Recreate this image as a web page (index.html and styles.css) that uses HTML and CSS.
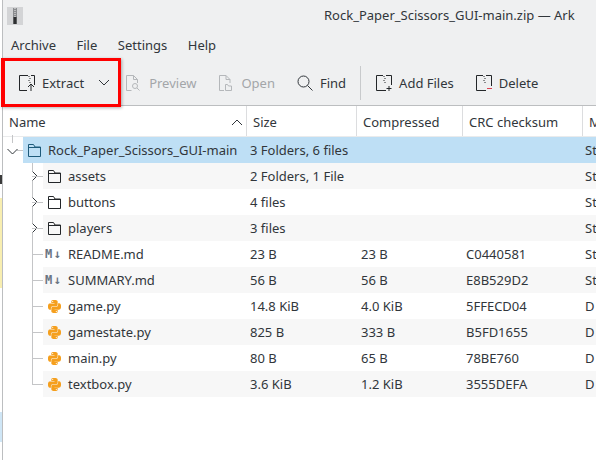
FILE: index.html
```html
<!DOCTYPE html>
<html lang="en">
<head>
<meta charset="UTF-8">
<title>Rock_Paper_Scissors_GUI-main.zip — Ark</title>
<link rel="stylesheet" href="styles.css">
</head>
<body>
<svg class="defs" xmlns="http://www.w3.org/2000/svg">
  <symbol id="folder" viewBox="0 0 13 13">
    <path d="M.5 12.500V.5h5l1.500 2.500h5.500v9.500z" fill="none" stroke="currentColor"/>
    <path d="M.5 3.500h12" fill="none" stroke="currentColor"/>
  </symbol>
  <symbol id="python" viewBox="0 0 24 24">
    <path fill="#f59f1d" fill-rule="evenodd" d="M14.25.18l.9.2.73.26.59.3.45.32.34.34.25.34.16.33.1.3.04.26.02.2-.01.13V8.5l-.05.63-.13.55-.21.46-.26.38-.3.31-.33.25-.35.19-.35.14-.33.1-.3.07-.26.04-.21.02H8.77l-.69.05-.59.14-.5.22-.41.27-.33.32-.27.35-.2.36-.15.37-.1.35-.07.32-.04.27-.02.21v3.06H3.17l-.21-.03-.28-.07-.32-.12-.35-.18-.36-.26-.36-.36-.35-.46-.32-.59-.28-.73-.21-.88-.14-1.05-.05-1.23.06-1.22.16-1.04.24-.87.32-.71.36-.57.4-.44.42-.33.42-.24.4-.16.36-.1.32-.05.24-.01h.16l.06.01h8.16v-.83H6.18l-.01-2.75-.02-.37.05-.34.11-.31.17-.28.25-.26.31-.23.38-.2.44-.18.51-.15.58-.12.64-.1.71-.06.77-.04.84-.02 1.27.05zm-6.3 1.98l-.23.33-.08.41.08.41.23.34.33.22.41.09.41-.09.33-.22.23-.34.08-.41-.08-.41-.23-.33-.33-.23-.41-.08-.41.08zm13.09 3.95l.28.06.32.12.35.18.36.27.36.35.35.47.32.59.28.73.21.88.14 1.04.05 1.23-.06 1.23-.16 1.04-.24.86-.32.71-.36.57-.4.45-.42.33-.42.24-.4.16-.36.09-.32.05-.24.02-.16-.01h-8.22v.82h5.84l.01 2.76.02.36-.05.34-.11.31-.17.29-.25.25-.31.24-.38.2-.44.17-.51.15-.58.13-.64.09-.71.07-.77.04-.84.01-1.27-.04-1.07-.14-.9-.2-.73-.25-.59-.3-.45-.33-.34-.34-.25-.34-.16-.33-.1-.3-.04-.25-.02-.2.01-.13v-5.34l.05-.64.13-.54.21-.46.26-.38.3-.32.33-.24.35-.2.35-.14.33-.1.3-.06.26-.04.21-.02.13-.01h5.84l.69-.05.59-.14.5-.21.41-.28.33-.32.27-.35.2-.36.15-.36.1-.35.07-.32.04-.28.02-.21V6.070h2.090l.14.01zm-6.47 14.250l-.23.33-.08.41.08.41.23.33.33.23.41.08.41-.08.33-.23.23-.33.08-.41-.08-.41-.23-.33-.33-.23-.41-.08-.41.08z"/>
  </symbol>
  <symbol id="expand" viewBox="0 0 8 10">
    <path d="M1.500 .5L6 5 1.500 9.500" fill="none" stroke="#31363b"/>
  </symbol>
</svg>

<div class="page">
  <div class="sliver"></div>
  <div class="window">

    <div class="titlebar">
      <svg class="app-icon" width="16" height="18" viewBox="0 0 16 18">
        <rect width="16" height="18" fill="#d3d4d6"/>
        <rect x="6" y="1" width="4" height="16" fill="#8a8c8f"/>
        <path d="M8 1v9" stroke="#eee" stroke-dasharray="1 1"/>
        <rect x="6.500" y="10" width="3" height="7" fill="#2d2f31"/>
      </svg>
      <span class="title">Rock_Paper_Scissors_GUI-main.zip — Ark</span>
    </div>

    <div class="menubar">
      <span>Archive</span>
      <span>File</span>
      <span>Settings</span>
      <span>Help</span>
    </div>

    <div class="toolbar">
      <div class="tool tool-extract">
        <svg width="16" height="16" viewBox="0 0 16 16" fill="none" stroke="#232629">
          <path d="M9 .5H.5v15H8M12 .5h3.500V10"/>
          <path d="M10 1v1M11 3v1M10 5v1M11 7v1"/>
          <path d="M12 16V9M9 12l3-3 3 3"/>
        </svg>
        <span>Extract</span>
        <svg class="drop" width="12" height="7" viewBox="0 0 12 7" fill="none" stroke="#31363b"><path d="M1 1l5 5 5-5"/></svg>
      </div>
      <div class="tool off">
        <svg width="16" height="16" viewBox="0 0 16 16" fill="none" stroke="#b4b7ba">
          <path d="M7.500 .5H.5v15h5M7.500 .5L11.500 4.500V8M7.500 .5v4h4"/>
          <circle cx="9" cy="11" r="2.500"/><path d="M11 13l2.500 2.500"/>
        </svg>
        <span>Preview</span>
      </div>
      <div class="tool off">
        <svg width="16" height="16" viewBox="0 0 16 16" fill="none" stroke="#b4b7ba">
          <path d="M8 .5H1.500v15H6M8 .5L12 4.500V8M8 .5v4h4"/>
          <path d="M7.500 15.500v-6h2l1 1.500h3v4.500z"/>
        </svg>
        <span>Open</span>
      </div>
      <div class="tool">
        <svg width="16" height="16" viewBox="0 0 16 16" fill="none" stroke="#31363b">
          <circle cx="6.500" cy="6.500" r="5.500"/><path d="M10.500 10.500l5 5"/>
        </svg>
        <span>Find</span>
      </div>
      <div class="tool-sep"></div>
      <div class="tool">
        <svg width="16" height="16" viewBox="0 0 16 16" fill="none" stroke="#232629">
          <path d="M7 .5H.5v15H10M10 .5h5.500V10"/>
          <path d="M8 1v1M9 3v1M8 5v1M9 7v1"/>
          <path d="M13 11v5M10.500 13.500h5"/>
        </svg>
        <span>Add Files</span>
      </div>
      <div class="tool">
        <svg width="16" height="16" viewBox="0 0 16 16" fill="none" stroke="#232629">
          <path d="M7 .5H.5v15H10M10 .5h5.500V11"/>
          <path d="M8 1v1M9 3v1M8 5v1M9 7v1"/>
          <path d="M11 13.500h5" stroke="#da4453"/>
        </svg>
        <span>Delete</span>
      </div>
    </div>

    <div class="tree">
      <div class="head">
        <div class="head-cell col-name">Name
          <svg class="sort" width="12" height="7" viewBox="0 0 12 7" fill="none" stroke="#31363b"><path d="M1 6l5-5 5 5"/></svg>
        </div>
        <div class="head-cell col-size">Size</div>
        <div class="head-cell col-comp">Compressed</div>
        <div class="head-cell col-crc">CRC checksum</div>
        <div class="head-cell col-meth">M</div>
      </div>

      <div class="row root">
        <div class="branch">
          <svg class="open-arrow" width="11" height="7" viewBox="0 0 11 7" fill="none" stroke="#31363b"><path d="M.5 1l5 5 5-5"/></svg>
        </div>
        <div class="cells selected">
          <div class="cell col-name"><svg class="ico ico-root"><use href="#folder"/></svg>Rock_Paper_Scissors_GUI-main</div>
          <div class="cell col-size">3 Folders, 6 files</div>
          <div class="cell col-comp"></div>
          <div class="cell col-crc"></div>
          <div class="cell col-meth">St</div>
        </div>
      </div>

      <div class="row">
        <div class="branch"><svg class="arrow" width="8" height="10"><use href="#expand"/></svg></div>
        <div class="cells alt">
          <div class="cell col-name"><svg class="ico"><use href="#folder"/></svg>assets</div>
          <div class="cell col-size">2 Folders, 1 File</div>
          <div class="cell col-comp"></div>
          <div class="cell col-crc"></div>
          <div class="cell col-meth">St</div>
        </div>
      </div>

      <div class="row">
        <div class="branch"><svg class="arrow" width="8" height="10"><use href="#expand"/></svg></div>
        <div class="cells">
          <div class="cell col-name"><svg class="ico"><use href="#folder"/></svg>buttons</div>
          <div class="cell col-size">4 files</div>
          <div class="cell col-comp"></div>
          <div class="cell col-crc"></div>
          <div class="cell col-meth">St</div>
        </div>
      </div>

      <div class="row">
        <div class="branch"><svg class="arrow" width="8" height="10"><use href="#expand"/></svg></div>
        <div class="cells alt">
          <div class="cell col-name"><svg class="ico"><use href="#folder"/></svg>players</div>
          <div class="cell col-size">3 files</div>
          <div class="cell col-comp"></div>
          <div class="cell col-crc"></div>
          <div class="cell col-meth">St</div>
        </div>
      </div>

      <div class="row">
        <div class="branch"></div>
        <div class="cells">
          <div class="cell col-name"><span class="md">M↓</span>README.md</div>
          <div class="cell col-size">23 B</div>
          <div class="cell col-comp">23 B</div>
          <div class="cell col-crc">C0440581</div>
          <div class="cell col-meth">St</div>
        </div>
      </div>

      <div class="row">
        <div class="branch"></div>
        <div class="cells alt">
          <div class="cell col-name"><span class="md">M↓</span>SUMMARY.md</div>
          <div class="cell col-size">56 B</div>
          <div class="cell col-comp">56 B</div>
          <div class="cell col-crc">E8B529D2</div>
          <div class="cell col-meth">St</div>
        </div>
      </div>

      <div class="row">
        <div class="branch"></div>
        <div class="cells">
          <div class="cell col-name"><svg class="ico"><use href="#python"/></svg>game.py</div>
          <div class="cell col-size">14.8 KiB</div>
          <div class="cell col-comp">4.0 KiB</div>
          <div class="cell col-crc">5FFECD04</div>
          <div class="cell col-meth">D</div>
        </div>
      </div>

      <div class="row">
        <div class="branch"></div>
        <div class="cells alt">
          <div class="cell col-name"><svg class="ico"><use href="#python"/></svg>gamestate.py</div>
          <div class="cell col-size">825 B</div>
          <div class="cell col-comp">333 B</div>
          <div class="cell col-crc">B5FD1655</div>
          <div class="cell col-meth">D</div>
        </div>
      </div>

      <div class="row">
        <div class="branch"></div>
        <div class="cells">
          <div class="cell col-name"><svg class="ico"><use href="#python"/></svg>main.py</div>
          <div class="cell col-size">80 B</div>
          <div class="cell col-comp">65 B</div>
          <div class="cell col-crc">78BE760</div>
          <div class="cell col-meth">D</div>
        </div>
      </div>

      <div class="row last">
        <div class="branch"></div>
        <div class="cells alt">
          <div class="cell col-name"><svg class="ico"><use href="#python"/></svg>textbox.py</div>
          <div class="cell col-size">3.6 KiB</div>
          <div class="cell col-comp">1.2 KiB</div>
          <div class="cell col-crc">3555DEFA</div>
          <div class="cell col-meth">D</div>
        </div>
      </div>
    </div>

  </div>
</div>

<div class="callout"></div>
</body>
</html>
```

FILE: styles.css
```css
html, body { margin: 0; padding: 0; background: #fff; overflow: hidden; }
body { width: 596px; height: 460px; position: relative; font: 13px "Noto Sans", sans-serif; color: #31363b; }
.defs { display: none; }

.page { display: flex; width: 596px; height: 460px; }
.sliver {
  width: 2px; flex: none;
  background: linear-gradient(#fff 0, #fff 175px, #3a3a3a 175px, #3a3a3a 184px, #fff 184px, #fff 198px, #f8eeb0 198px, #f8eeb0 288px, #fff 288px, #fff 412px, #cfe6f6 412px, #cfe6f6 442px, #fff 442px);
}
.window { flex: 1; min-width: 0; border-left: 1px solid #bcbec0; display: flex; flex-direction: column; }

.titlebar { height: 29px; background: #eff0f1; display: flex; align-items: center; padding-left: 4px; }
.app-icon { flex: none; margin-top: 3px; }
.title { margin-left: 301px; white-space: nowrap; }

.menubar { height: 31px; background: #eff0f1; display: flex; align-items: center; gap: 20.500px; padding-left: 8px; }

.toolbar { height: 45px; background: #eff0f1; display: flex; align-items: center; padding-left: 5px; border-bottom: 1px solid #bcbec0; }
.tool { display: flex; align-items: center; gap: 7px; padding: 0 11px; white-space: nowrap; }
.tool svg { flex: none; }
.tool-extract { padding-right: 5px; }
.drop { margin-left: 7px; }
.off { color: #a3a6a9; }
.tool-sep { width: 1px; height: 34px; background: #c8cacc; margin: 0 4px 0 3px; }

.tree { flex: 1; background: #fff; }
.head { display: flex; height: 30px; border-bottom: 1px solid #eaebec; }
.head-cell { display: flex; align-items: center; justify-content: space-between; padding: 2px 3px 0 6px; box-sizing: border-box; border-right: 1px solid #dcdddf; white-space: nowrap; overflow: hidden; }
.head-cell.col-name { flex: none; width: 244px; }
.head-cell.col-meth { border-right: 0; }

.row { display: flex; height: 26px; }
.branch { flex: none; width: 40px; position: relative; }
.root .branch { width: 20px; }
.cells { flex: 1; min-width: 0; display: flex; }
.selected { background: #bedff5; }
.alt { background: #f7f7f7; }
.cell { display: flex; align-items: center; white-space: nowrap; overflow: hidden; padding-left: 3px; box-sizing: border-box; }
.cells .col-name { flex: 1; min-width: 0; padding-left: 5px; }
.col-size { flex: none; width: 110px; }
.col-comp { flex: none; width: 106px; }
.col-crc { flex: none; width: 120px; }
.col-meth { flex: none; width: 13px; }
.cells .col-comp { padding-left: 4px; }
.cells .col-meth { padding-left: 2px; }

.ico { flex: none; width: 13px; height: 13px; margin-right: 7px; color: #232629; }
.ico-root { color: #1d5a7a; }
.md { flex: none; width: 23px; margin-left: -3px; font: bold 12px "DejaVu Sans Mono", monospace; color: #6b7583; letter-spacing: 1.5px; }

/* tree connectors */
.branch::before { content: ""; position: absolute; left: 29px; top: 0; bottom: 0; width: 1px; background: #c4c5c7; }
.branch::after { content: ""; position: absolute; left: 29px; top: 13px; width: 11px; height: 1px; background: #c4c5c7; }
.last .branch::before { bottom: 13px; }
.root .branch::before { left: 9px; top: -2px; bottom: 20px; }
.root .branch::after { left: 14px; width: 6px; }
.arrow { position: absolute; left: 28px; top: 8px; background: #fff; }
.open-arrow { position: absolute; left: 4px; top: 11px; z-index: 1; }

/* red highlight drawn over the screenshot */
.callout { position: absolute; left: 1px; top: 58px; width: 120px; height: 49px; box-sizing: border-box; border: 3px solid #f00; border-left-width: 4px; box-shadow: 1px 1px 3px rgba(0, 0, 0, .3); }
```
